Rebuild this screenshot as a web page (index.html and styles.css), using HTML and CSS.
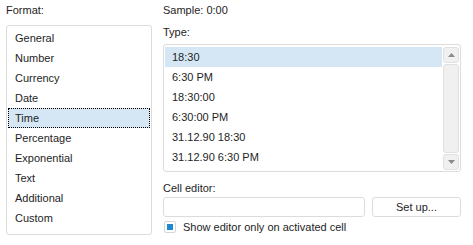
FILE: index.html
```html
<!DOCTYPE html>
<html>
<head>
<meta charset="utf-8">
<link rel="stylesheet" href="styles.css">
</head>
<body>
<div class="dialog">
  <div class="col-left">
    <div class="label">Format:</div>
    <div class="listbox format-list">
      <div class="item">General</div>
      <div class="item">Number</div>
      <div class="item">Currency</div>
      <div class="item">Date</div>
      <div class="item focused">Time</div>
      <div class="item">Percentage</div>
      <div class="item">Exponential</div>
      <div class="item">Text</div>
      <div class="item">Additional</div>
      <div class="item">Custom</div>
    </div>
  </div>
  <div class="col-right">
    <div class="label">Sample: 0:00</div>
    <div class="label type-label">Type:</div>
    <div class="listbox type-list">
      <div class="type-items">
        <div class="titem selected">18:30</div>
        <div class="titem">6:30 PM</div>
        <div class="titem">18:30:00</div>
        <div class="titem">6:30:00 PM</div>
        <div class="titem">31.12.90 18:30</div>
        <div class="titem">31.12.90 6:30 PM</div>
      </div>
      <div class="scrollbar">
        <div class="sb-btn"><svg width="7" height="4" viewBox="0 0 7 4"><path d="M0 4 L3.5 0 L7 4 Z" fill="#8a8a8a"/></svg></div>
        <div class="sb-thumb"></div>
        <div class="sb-btn"><svg width="7" height="4" viewBox="0 0 7 4"><path d="M0 0 L3.5 4 L7 0 Z" fill="#8a8a8a"/></svg></div>
      </div>
    </div>
    <div class="label editor-label">Cell editor:</div>
    <div class="editor-row">
      <div class="input"></div>
      <div class="button">Set up...</div>
    </div>
    <div class="check-row">
      <div class="checkbox"><div class="check-mark"></div></div>
      <span>Show editor only on activated cell</span>
    </div>
  </div>
</div>
</body>
</html>
```
FILE: styles.css
```css
html, body {
  margin: 0;
  padding: 0;
  background: #ffffff;
}
body {
  font-family: "Liberation Sans", Arial, sans-serif;
  font-size: 11px;
  color: #1e1e1e;
  width: 473px;
  height: 245px;
  overflow: hidden;
}
.dialog {
  display: flex;
  padding-left: 6px;
  gap: 11px;
}
.col-left {
  width: 146px;
  display: flex;
  flex-direction: column;
}
.col-right {
  width: 298px;
  display: flex;
  flex-direction: column;
}
.label {
  height: 20px;
  line-height: 20px;
  white-space: nowrap;
}
.listbox {
  border: 1px solid #dcdcdc;
  border-radius: 3px;
  box-sizing: border-box;
  background: #fff;
}
.format-list {
  margin-top: 5px;
  height: 210px;
  padding: 2px 1px;
}
.item {
  height: 20px;
  line-height: 20px;
  padding-left: 7px;
  box-sizing: border-box;
}
.item.focused {
  background: #d5e7f5;
  outline: 1px dotted #000;
  outline-offset: -1px;
}
.type-label {
  margin-top: 2px;
}
.type-list {
  margin-top: 2px;
  height: 128px;
  display: flex;
  padding: 2px 1px 1px 1px;
}
.type-items {
  flex: 1;
}
.titem {
  height: 20px;
  line-height: 20px;
  padding-left: 7px;
}
.titem.selected {
  background: #d5e7f5;
}
.scrollbar {
  width: 16px;
  margin-left: 1px;
  display: flex;
  flex-direction: column;
  gap: 1px;
}
.sb-btn {
  height: 16px;
  background: #f0f0f0;
  border: 1px solid #e0e0e0;
  border-radius: 3px;
  box-sizing: border-box;
  display: flex;
  align-items: center;
  justify-content: center;
}
.sb-thumb {
  flex: 1;
  background: #f0f0f0;
  border: 1px solid #e0e0e0;
  border-radius: 3px;
}
.editor-label {
  margin-top: 8px;
  height: 17px;
  line-height: 17px;
}
.editor-row {
  display: flex;
  gap: 7px;
  height: 20px;
}
.input {
  flex: 1;
  border: 1px solid #dcdcdc;
  border-radius: 3px;
}
.button {
  width: 89px;
  border: 1px solid #dcdcdc;
  border-radius: 3px;
  box-sizing: border-box;
  text-align: center;
  line-height: 18px;
}
.check-row {
  margin-top: 3px;
  display: flex;
  align-items: center;
  height: 13px;
  gap: 7px;
  padding-left: 1px;
}
.checkbox {
  width: 12px;
  height: 12px;
  border: 1px solid #d6d6d6;
  border-radius: 2px;
  box-sizing: border-box;
  display: flex;
  align-items: center;
  justify-content: center;
}
.check-mark {
  width: 6px;
  height: 6px;
  background: #1e88d0;
}
```
